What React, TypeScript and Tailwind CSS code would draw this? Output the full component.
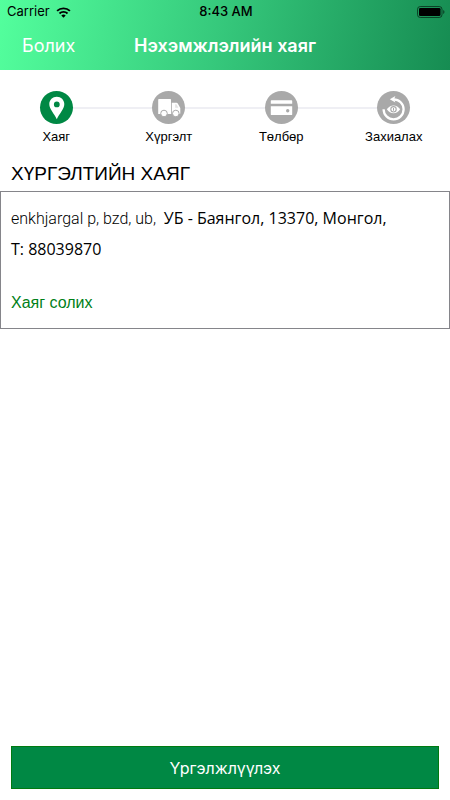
import type { ReactNode } from "react";

type Step = {
  label: string;
  active?: boolean;
  icon: ReactNode;
};

const PinIcon = () => (
  <svg viewBox="0 0 33 33" className="size-full" aria-hidden="true">
    <path
      fill="#fff"
      fillRule="evenodd"
      d="M16.8 5.8c-4.2 0-7.5 3.200-7.500 7.300 0 5.200 4.800 9.400 7.500 15.100 2.700-5.700 7.500-9.900 7.500-15.100 0-4.100-3.300-7.300-7.500-7.300zm0 4.700a2.900 2.900 0 1 1 0 5.800 2.900 2.900 0 0 1 0-5.800z"
    />
  </svg>
);

const TruckIcon = () => (
  <svg viewBox="0 0 33 33" className="size-full" aria-hidden="true">
    <path
      fill="#fff"
      d="M6.900 8h11.400a.7.7 0 0 1 .7.700V23H6.200V8.700a.7.7 0 0 1 .7-.7zM19.800 11.800h4.600c.7 0 1.200.3 1.500.9l2.400 4.200v5.400a.7.7 0 0 1-.7.700h-7.800z"
    />
    <path fill="#e4e4e4" d="M23.200 13.200h1.200l2 3.500h-3.200z" />
    <g fill="#fff" stroke="#a9a9a9" strokeWidth="1">
      <circle cx="12" cy="22.500" r="3.300" />
      <circle cx="23.800" cy="22.500" r="3.300" />
    </g>
  </svg>
);

const CardIcon = () => (
  <svg viewBox="0 0 33 33" className="size-full" aria-hidden="true">
    <path
      fill="#fff"
      d="M6.500 9.200h20a.7.7 0 0 1 .7.700v2.900H5.800V9.900a.7.7 0 0 1 .7-.7zM5.800 15.200h21.400v8.200a.7.7 0 0 1-.7.700h-20a.7.7 0 0 1-.7-.7z"
    />
    <circle cx="22.700" cy="19.700" r="1.700" fill="#a9a9a9" />
  </svg>
);

const ReviewIcon = () => (
  <svg viewBox="0 0 33 33" className="size-full" aria-hidden="true">
    <path
      d="M6.600 18.300a10 10 0 1 0 10-10"
      fill="none"
      stroke="#fff"
      strokeWidth="2.300"
    />
    <path fill="#fff" d="m12.800 8.300 5.600-3.300-1.300 3.300 1.300 3.300z" />
    <path
      fill="#fff"
      d="M9.800 18.300c1.800-2.600 4-3.900 6.700-3.900s4.900 1.300 6.700 3.900c-1.800 2.600-4 3.900-6.700 3.900s-4.900-1.300-6.700-3.900z"
    />
    <circle
      cx="16.500"
      cy="18.300"
      r="2.700"
      fill="none"
      stroke="#a9a9a9"
      strokeWidth="1.100"
    />
    <path stroke="#a9a9a9" strokeWidth="1" d="M16.500 16.900v2.800" />
  </svg>
);

const steps: Step[] = [
  { label: "Хаяг", active: true, icon: <PinIcon /> },
  { label: "Хүргэлт", icon: <TruckIcon /> },
  { label: "Төлбөр", icon: <CardIcon /> },
  { label: "Захиалах", icon: <ReviewIcon /> },
];

const StatusBar = () => (
  <div className="grid h-6 grid-cols-3 items-center pl-[7px] pr-[5px] font-['Inter',sans-serif] text-[13px] text-black">
    <div className="flex items-center gap-[6px]">
      <span>Carrier</span>
      <svg viewBox="0 0 16 12" className="h-[11px] w-[15px]" aria-hidden="true">
        <g fill="none" stroke="#000" strokeWidth="2">
          <path d="M1 4.300a10 10 0 0 1 14 0" />
          <path d="M3.600 7.100a6.200 6.200 0 0 1 8.800 0" />
        </g>
        <path d="M5.600 9.300a3.400 3.400 0 0 1 4.800 0L8 11.700z" />
      </svg>
    </div>
    <span className="text-center font-medium">8:43 AM</span>
    <svg
      viewBox="0 0 28 12"
      className="h-3 w-7 justify-self-end"
      aria-hidden="true"
    >
      <rect
        x=".5"
        y=".5"
        width="24.500"
        height="11"
        rx="2.800"
        fill="none"
        stroke="#000"
        strokeOpacity=".55"
      />
      <rect x="2" y="2" width="21.500" height="8" rx="1.300" />
      <path d="M26.200 4v4a2.200 2.200 0 0 0 0-4z" opacity=".55" />
    </svg>
  </div>
);

const App = () => {
  return (
    <div className="flex min-h-screen flex-col bg-white font-['Liberation_Sans',sans-serif] text-black">
      <header className="bg-[linear-gradient(100deg,#53ff9d_0%,#36c97c_48%,#168c52_100%)]">
        <StatusBar />
        <div className="grid h-[46px] grid-cols-[1fr_auto_1fr] items-center px-[22px] pb-[2px] font-['Inter',sans-serif] text-lg text-white">
          <button type="button" className="justify-self-start">
            Болих
          </button>
          <h1 className="font-semibold">Нэхэмжлэлийн хаяг</h1>
        </div>
      </header>

      <main className="flex flex-1 flex-col">
        <ol className="grid grid-cols-4 pt-[21px]">
          {steps.map((step, index) => (
            <li
              key={step.label}
              className="relative flex flex-col items-center gap-1"
            >
              {/* line to the next step */}
              {index < steps.length - 1 && (
                <span className="absolute left-1/2 top-4 h-[2px] w-full bg-[#efeff4]" />
              )}
              <span
                className={`relative size-[33px] rounded-full ${
                  step.active ? "bg-[#008844]" : "bg-[#a9a9a9]"
                }`}
              >
                {step.icon}
              </span>
              <span className="text-[13px] leading-[18px]">{step.label}</span>
            </li>
          ))}
        </ol>

        <h2 className="mt-[14px] px-[11px] text-[19px] leading-7">
          ХҮРГЭЛТИЙН ХАЯГ
        </h2>

        <section className="mt-[3px] border border-[#85858a] px-[10px] pb-[10px] pt-[11px]">
          <address className="whitespace-pre-wrap font-['Open_Sans',sans-serif] text-base leading-[30px] not-italic">
            <span className="font-['Roboto',sans-serif] font-light">
              {"enkhjargal p, bzd, ub,  "}
            </span>
            УБ - Баянгол, 13370, Монгол,
            <br />
            T: 88039870
          </address>
          <a href="#address" className="mt-6 block leading-[30px] text-[#008018]">
            Хаяг солих
          </a>
        </section>

        <div className="mt-auto px-[11px] pb-[11px]">
          <button
            type="button"
            className="h-[43px] w-full border border-[#007a10] bg-[#008844] font-['Inter',sans-serif] text-base text-white"
          >
            Үргэлжлүүлэх
          </button>
        </div>
      </main>
    </div>
  );
};

export default App;
